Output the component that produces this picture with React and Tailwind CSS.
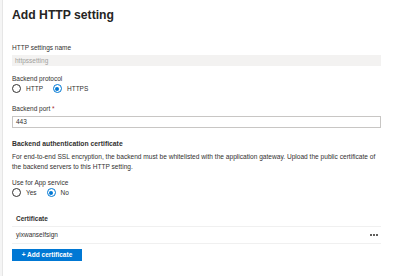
import React from "react";

function Radio({ checked, label }) {
  return (
    <div className="flex items-center gap-[5px]">
      <span className={`flex h-[9px] w-[9px] items-center justify-center rounded-full border ${checked ? "border-[#0078d4]" : "border-[#323130]"}`}>
        {checked && <span className="h-[4px] w-[4px] rounded-full bg-[#0078d4]" />}
      </span>
      <span className="text-[6.5px] text-[#323130]">{label}</span>
    </div>
  );
}

export default function App() {
  return (
    <div className="flex h-[276px] w-[400px] bg-white" style={{ fontFamily: '"Liberation Sans", Arial, sans-serif' }}>
      <div className="w-[3px] shrink-0 border-r border-[#e6e6e6] bg-[#f5f5f5]" />
      <div className="flex flex-1 flex-col pl-[9px] pr-[19px] text-[#323130]">
        <div className="mt-[7px] h-[16px] text-[12.2px] font-semibold leading-[16px] text-[#252423]">Add HTTP setting</div>

        <div className="mt-[21px] text-[6.5px] leading-[8px]">HTTP settings name</div>
        <div className="mt-[3px] flex h-[11px] items-center bg-[#f3f2f1] pl-[3px] text-[6.5px] text-[#a19f9d]">httpssetting</div>

        <div className="mt-[9px] text-[6.5px] leading-[8px]">Backend protocol</div>
        <div className="mt-[1px] flex items-center gap-[10px]">
          <Radio label="HTTP" />
          <Radio checked label="HTTPS" />
        </div>

        <div className="mt-[11px] text-[6.5px] leading-[8px]">Backend port <span className="text-[#a4262c]">*</span></div>
        <div className="mt-[3px] flex h-[12px] items-center border border-[#c8c6c4] pl-[3px] text-[6.5px]">443</div>

        <div className="mt-[12px] text-[6.8px] font-bold leading-[8px]">Backend authentication certificate</div>
        <div className="mt-[4px] whitespace-nowrap text-[6.6px] leading-[10px]">
          For end-to-end SSL encryption, the backend must be whitelisted with the application gateway. Upload the public certificate of<br />
          the backend servers to this HTTP setting.
        </div>

        <div className="mt-[7px] text-[6.5px] leading-[8px]">Use for App service</div>
        <div className="mt-[1px] flex items-center gap-[10px]">
          <Radio label="Yes" />
          <Radio checked label="No" />
        </div>

        <div className="mt-[15px] flex h-[14px] items-center border-b border-[#f0f0f0] pl-[4px] text-[6.5px] font-semibold">Certificate</div>
        <div className="flex h-[17px] items-center justify-between border-b border-[#f0f0f0] pl-[4px] pr-[3px] text-[6.5px]">
          <span>yixwanselfsign</span>
          <span className="flex gap-[1px]">
            <span className="h-[2px] w-[2px] bg-[#605e5c]" />
            <span className="h-[2px] w-[2px] bg-[#605e5c]" />
            <span className="h-[2px] w-[2px] bg-[#605e5c]" />
          </span>
        </div>
        <div className="mt-[5px] flex h-[12px] w-[70px] items-center justify-center bg-[#0078d4] text-[6.5px] font-semibold text-white">+ Add certificate</div>
      </div>
    </div>
  );
}
